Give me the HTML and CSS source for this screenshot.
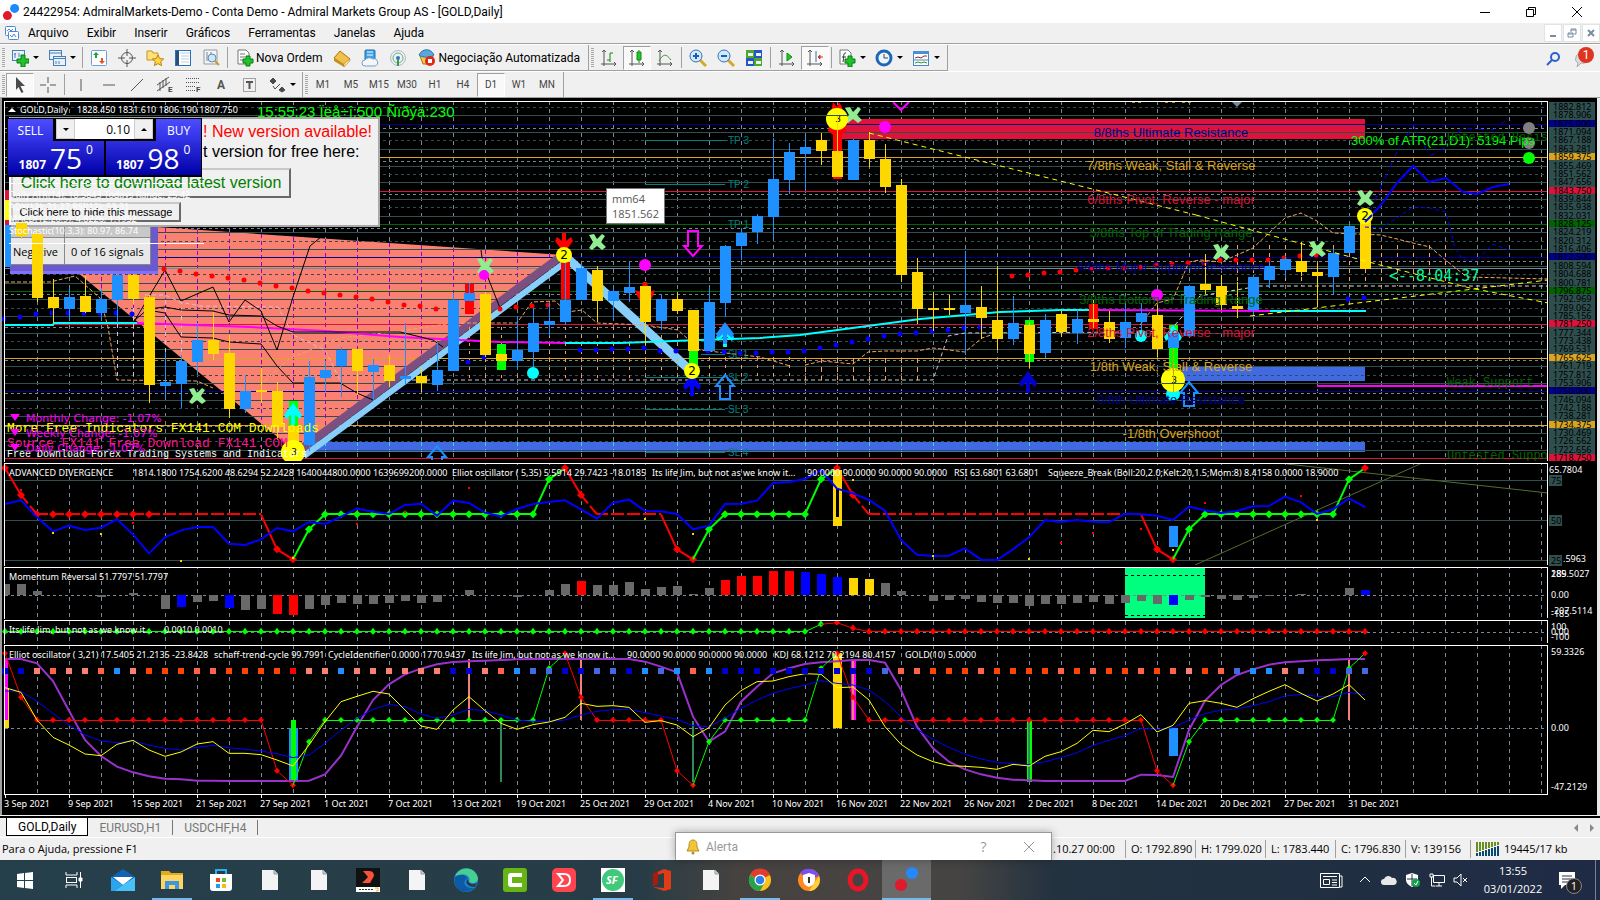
FILE: index.html
```html
<!DOCTYPE html>
<html lang="pt">
<head>
  <meta charset="UTF-8">
  <meta name="viewport" content="width=device-width, initial-scale=1.0">
  <title>24422954: AdmiralMarkets-Demo - [GOLD,Daily]</title>
  <link rel="stylesheet" href="styles.css">
</head>
<body>
  <header class="titlebar">
    <svg class="logo" viewBox="0 0 20 20"><circle cx="14" cy="6" r="5" fill="#1e88ff"/><circle cx="6" cy="14" r="5" fill="#e01a2b"/></svg>
    <span class="title">24422954: AdmiralMarkets-Demo - Conta Demo - Admiral Markets Group AS - [GOLD,Daily]</span>
    <div class="window-buttons">
      <button aria-label="Minimizar"><svg viewBox="0 0 12 12"><path d="M1 6.500h10"/></svg></button>
      <button aria-label="Restaurar"><svg viewBox="0 0 12 12"><path d="M1.500 3.500h7v7h-7zM3.500 3.500v-2h7v7h-2"/></svg></button>
      <button aria-label="Fechar"><svg viewBox="0 0 12 12"><path d="M1 1l10 10M11 1L1 11"/></svg></button>
    </div>
  </header>

  <nav class="menubar">
    <svg class="menu-icon" viewBox="0 0 16 16" fill="#fff" stroke="#4c86d8"><rect x="1.500" y="1.500" width="10" height="9" rx="1"/><path d="M3 6l2-2 2 2 2-2"/><rect x="4.500" y="6.500" width="10" height="8" rx="1"/><path d="M6 10l2 2 2-3 2 3"/></svg>
    <button>Arquivo</button>
    <button>Exibir</button>
    <button>Inserir</button>
    <button>Gráficos</button>
    <button>Ferramentas</button>
    <button>Janelas</button>
    <button>Ajuda</button>
    <div class="mdi-buttons">
      <button aria-label="Minimizar janela"><svg viewBox="0 0 12 12"><path d="M3 9h6" stroke-width="2"/></svg></button>
      <button aria-label="Restaurar janela"><svg viewBox="0 0 12 12"><path d="M2 6h5v4H2zM2 7h5M5 5V2h5v5H8M5 3h5"/></svg></button>
      <button aria-label="Fechar janela"><svg viewBox="0 0 12 12"><path d="M3 3l6 6M9 3L3 9" stroke-width="2"/></svg></button>
    </div>
  </nav>

  <div class="toolbar">
    <div class="group">
      <span class="grip"></span>
      <button class="tool drop" aria-label="Novo gráfico"><svg viewBox="0 0 18 18"><rect x="1.500" y="1.500" width="12" height="10" fill="#e8f2fb" stroke="#4a7fb5"/><path d="M4 4v5M3 5h2M8 4v4" stroke="#4a7fb5"/><path d="M10 6h4v4h4v4h-4v4h-4v-4H6v-4h4z" fill="#1fc32b" stroke="#0b7a12"/></svg></button>
      <button class="tool drop" aria-label="Perfis"><svg viewBox="0 0 18 18" fill="#e8f2fb" stroke="#4a7fb5"><rect x="1.500" y="1.500" width="12" height="9"/><path d="M1 4h12"/><rect x="5.500" y="7.500" width="12" height="9"/><path d="M5 9.500h12M8 12v3M11 12v3"/></svg></button>
      <span class="sep"></span>
      <button class="tool" aria-label="Observação do mercado"><svg viewBox="0 0 18 18"><rect x="1.500" y="1.500" width="15" height="15" rx="1" fill="#fff" stroke="#6aa0dc"/><path d="M6 3l3 3H7v3H5V6H3z" fill="#18a83a"/><path d="M12 15l-3-3h2V9h2v3h2z" fill="#e2552a"/></svg></button>
      <button class="tool" aria-label="Janela de dados"><svg viewBox="0 0 18 18" fill="none" stroke="#555"><circle cx="9" cy="9" r="5.500"/><path d="M9 0v7M9 11v7M0 9h7M11 9h7"/></svg></button>
      <button class="tool" aria-label="Navegador"><svg viewBox="0 0 18 18"><path d="M1 2h5l1 2h5v7H1z" fill="#ffe27a" stroke="#c29518"/><path d="M12 6l1.700 3.600 4 .4-3 2.600.9 4-3.600-2-3.600 2 .9-4-3-2.600 4-.4z" fill="#ffd63d" stroke="#c27e10"/></svg></button>
      <button class="tool" aria-label="Terminal"><svg viewBox="0 0 18 18"><rect x="1.500" y="1.500" width="15" height="15" fill="#fff" stroke="#2f6fb5"/><path d="M2 2h3v14H2z" fill="#2b4f7d"/><path d="M6 4h10M7 7h8M7 10h8M7 13h8" stroke="#b9cfe8"/></svg></button>
      <button class="tool" aria-label="Testador"><svg viewBox="0 0 18 18"><path d="M2 1h13v14H2z" fill="#f4f4f4" stroke="#999"/><path d="M5 3v9M9 3v6" stroke="#6c87a5"/><circle cx="10" cy="9" r="4" fill="#cfe6f8" stroke="#5b8cb9"/><path d="M13 12l4 4" stroke="#d09a2a" stroke-width="2"/></svg></button>
      <span class="sep"></span>
      <button class="tool wide"><svg viewBox="0 0 18 18"><path d="M2 1h8l3 3v11H2z" fill="#fff" stroke="#777"/><path d="M4 5h5M4 8h5M4 11h3" stroke="#777"/><path d="M10 7h4v3h3v4h-3v3h-4v-3H7v-4h3z" fill="#1fc32b" stroke="#0b7a12"/></svg>Nova Ordem</button>
      <button class="tool" aria-label="MetaEditor"><svg viewBox="0 0 18 18"><path d="M1 9l6-7 10 8-6 6z" fill="#f0c24a" stroke="#a87410"/><path d="M1 9v3l10 6v-3z" fill="#c98f1e"/><path d="M11 15l6-5v2l-6 6z" fill="#f7e6ae" stroke="#a87410" stroke-width=".5"/></svg></button>
      <button class="tool" aria-label="Mercado"><svg viewBox="0 0 18 18"><rect x="4" y="1" width="10" height="12" rx="1" fill="#39a3ea" stroke="#1f6fb0"/><path d="M6 3h6M6 6h6" stroke="#fff"/><path d="M4 17a3 3 0 010-6 5 4 0 018-1 3.500 3.500 0 012 7z" fill="#f3f7fb" stroke="#7f9cba"/></svg></button>
      <button class="tool" aria-label="Sinais"><svg viewBox="0 0 18 18" fill="none"><circle cx="9" cy="9" r="7.500" stroke="#9cc0cf"/><circle cx="9" cy="9" r="5" stroke="#6fae7b"/><circle cx="9" cy="9" r="2" fill="#2a7ad0"/><path d="M9 10v7" stroke="#3c9a46" stroke-width="2"/></svg></button>
      <button class="tool wide"><svg viewBox="0 0 18 18"><path d="M2 7h13l-2 8H5z" fill="#f3c84d" stroke="#a87410"/><path d="M1 6c3-7 12-7 15 0-4 3-11 3-15 0z" fill="#58a8de" stroke="#2c74a8"/><circle cx="12" cy="12" r="5" fill="#dd2a1b"/><path d="M10 10h4v4h-4z" fill="#fff"/></svg>Negociação Automatizada</button>
    </div>
    <div class="group">
      <span class="grip"></span>
      <button class="tool" aria-label="Barras"><svg class="line" viewBox="0 0 18 18"><path d="M4 1v16M2 3l2-2 2 2M1 15h15M14 13l2 2-2 2"/><path d="M10 4v9M10 4h3M7 11h3" stroke="#138a13"/></svg></button>
      <button class="tool pressed" aria-label="Velas"><svg class="line" viewBox="0 0 18 18"><path d="M4 1v16M2 3l2-2 2 2M1 15h15M14 13l2 2-2 2"/><path d="M11 1v13" stroke="#138a13"/><path d="M9 3h4v8H9z" fill="#20c828" stroke="#138a13"/></svg></button>
      <button class="tool" aria-label="Linhas"><svg class="line" viewBox="0 0 18 18"><path d="M4 1v16M2 3l2-2 2 2M1 15h15M14 13l2 2-2 2"/><path d="M3 12c4-7 7-8 12-1" stroke="#3e9d3e"/></svg></button>
      <span class="sep"></span>
      <button class="tool" aria-label="Mais zoom"><svg viewBox="0 0 18 18"><path d="M11 11l6 6" stroke="#d8a822" stroke-width="3"/><circle cx="7" cy="7" r="6" fill="#cfe8fb" stroke="#3273b5"/><path d="M4 7h6M7 4v6" stroke="#1d5fa8" stroke-width="2"/></svg></button>
      <button class="tool" aria-label="Menos zoom"><svg viewBox="0 0 18 18"><path d="M11 11l6 6" stroke="#d8a822" stroke-width="3"/><circle cx="7" cy="7" r="6" fill="#cfe8fb" stroke="#3273b5"/><path d="M4 7h6" stroke="#1d5fa8" stroke-width="2"/></svg></button>
      <button class="tool" aria-label="Organizar janelas"><svg viewBox="0 0 18 18"><path d="M1 1h8v8H1zM9 9h8v8H9z" fill="#4fa82a"/><path d="M9 1h8v8H9zM1 9h8v8H1z" fill="#2554c4"/><path d="M3 4h5v3H3zM11 4h5v3h-5zM3 12h5v3H3zM11 12h5v3h-5z" fill="#e9f2fb"/></svg></button>
      <span class="sep"></span>
      <button class="tool" aria-label="Rolagem automática"><svg class="line" viewBox="0 0 18 18"><path d="M4 1v16M2 3l2-2 2 2M1 15h15M14 13l2 2-2 2"/><path d="M9 4l5 4-5 4z" fill="#20c828" stroke="#138a13"/></svg></button>
      <button class="tool pressed" aria-label="Deslocar gráfico"><svg class="line" viewBox="0 0 18 18"><path d="M4 1v16M2 3l2-2 2 2M1 15h15M14 13l2 2-2 2"/><path d="M10 2v11" stroke="#2f6fb5"/><path d="M17 8h-4M14 6l-2 2 2 2z" fill="#d03a1a" stroke="#d03a1a"/></svg></button>
      <span class="sep"></span>
      <button class="tool drop" aria-label="Indicadores"><svg viewBox="0 0 18 18"><path d="M2 1h8l3 3v11H2z" fill="#fff" stroke="#777"/><path d="M8 4c-3-1-2 4-3 9M4 8h4" stroke="#333" fill="none"/><path d="M10 7h4v3h3v4h-3v4h-4v-4H7v-4h3z" fill="#1fc32b" stroke="#0b7a12"/></svg></button>
      <button class="tool drop" aria-label="Períodos"><svg viewBox="0 0 18 18"><circle cx="9" cy="9" r="7" fill="#eef5fc" stroke="#1d67b8" stroke-width="3"/><path d="M9 5v4h4" stroke="#444" fill="none"/></svg></button>
      <button class="tool drop" aria-label="Modelos"><svg viewBox="0 0 18 18"><rect x="1.500" y="2.500" width="15" height="14" fill="#fff" stroke="#4a86c6"/><path d="M1 2h16v3H1z" fill="#4a90d9"/><path d="M3 9l3-1 3 1 3-2 3 0" stroke="#9a2a1a" fill="none"/><path d="M2 11h14" stroke="#4a86c6"/><path d="M3 14l3-1 3 1 3-1 3 1" stroke="#2a9a2a" fill="none"/></svg></button>
    </div>
    <div class="toolbar-right">
      <button aria-label="Pesquisar"><svg viewBox="0 0 18 18" fill="none" stroke="#2a5fd0" stroke-width="2"><circle cx="11" cy="7" r="4"/><path d="M8 10l-5 5"/></svg></button>
      <button class="chat" aria-label="Mensagens"><svg viewBox="0 0 18 18"><path d="M2 7a7 5 0 0114 1 7 5 0 01-9 5l-4 4 1-4a6 5 0 01-2-6z" fill="#dcdce2" stroke="#aaa"/></svg><span class="badge">1</span></button>
    </div>
  </div>

  <div class="toolbar second">
    <div class="group">
      <span class="grip"></span>
      <button class="tool pressed" aria-label="Cursor"><svg viewBox="0 0 18 18"><path d="M5 1l9 9H9.500l3 6-2 1-3-6L5 14z" fill="#4a4a4a"/></svg></button>
      <button class="tool" aria-label="Mira"><svg class="line" viewBox="0 0 18 18"><path d="M9 1v6M9 11v6M1 9h6M11 9h6"/></svg></button>
      <span class="sep"></span>
      <button class="tool" aria-label="Linha vertical"><svg class="line" viewBox="0 0 18 18"><path d="M9 3v12"/></svg></button>
      <button class="tool" aria-label="Linha horizontal"><svg class="line" viewBox="0 0 18 18"><path d="M3 9h12"/></svg></button>
      <button class="tool" aria-label="Linha de tendência"><svg class="line" viewBox="0 0 18 18"><path d="M3 15L15 3"/></svg></button>
      <button class="tool" aria-label="Canal"><svg class="line" viewBox="0 0 18 18"><path d="M1 9L13 1M1 15L14 6M4 6v9M7 4v8M10 2v8"/><text x="12" y="16">E</text></svg></button>
      <button class="tool" aria-label="Fibonacci"><svg class="line" viewBox="0 0 18 18"><path d="M2 2.500h14M2 6.500h14M2 10.500h9M2 14.500h9" stroke-dasharray="1 1"/><text x="12" y="16">F</text></svg></button>
      <button class="tool letter" aria-label="Texto">A</button>
      <button class="tool" aria-label="Rótulo"><svg class="line" viewBox="0 0 18 18"><rect x="3.500" y="2.500" width="12" height="13" stroke-dasharray="1 1"/><path d="M6 6h7M9.500 6v7" stroke-width="2"/></svg></button>
      <button class="tool drop" aria-label="Setas"><svg viewBox="0 0 18 18" fill="#4a4a4a" stroke="#4a4a4a"><path d="M2 5l3-3 3 3-3 3zM11 14l3-3 3 3-3 2z"/><path d="M5 10l2 3 5-5" fill="none"/></svg></button>
    </div>
    <div class="group periods">
      <span class="grip"></span>
      <button>M1</button>
      <button>M5</button>
      <button>M15</button>
      <button>M30</button>
      <button>H1</button>
      <button>H4</button>
      <button class="pressed">D1</button>
      <button>W1</button>
      <button>MN</button>
    </div>
  </div>

  <main class="chart-window">
    <svg id="chart" class="chart" viewBox="0 98 1600 717"></svg>

    <div class="update-box">
      <p class="red">! New version available!</p>
      <p>t version for free here:</p>
      <button class="download">Click here to download latest version</button>
      <button class="hide">Click here to hide this message</button>
    </div>

    <div class="signals">
      <div class="row head"><span></span><span></span></div>
      <div class="row"><span>Negative</span><span>0 of 16 signals</span></div>
    </div>

    <div class="one-click">
      <div class="top">
        <button class="side">SELL</button>
        <div class="lots">
          <button aria-label="Diminuir"><i class="down"></i></button>
          <input type="text" aria-label="Volume" value="0.10">
          <button aria-label="Aumentar"><i class="up"></i></button>
        </div>
        <button class="side">BUY</button>
      </div>
      <div class="prices">
        <button><b>1807</b><span>75</span><sup>0</sup></button>
        <button><b>1807</b><span>98</span><sup>0</sup></button>
      </div>
    </div>

    <svg id="overlay" class="chart overlay" viewBox="0 98 1600 717"></svg>
    <div class="tooltip">mm64<br>1851.562</div>
  </main>

  <div class="tabs">
    <button class="active">GOLD,Daily</button>
    <button>EURUSD,H1</button>
    <button>USDCHF,H4</button>
    <span class="scroll"><i class="left"></i><i class="right"></i></span>
  </div>

  <footer class="statusbar">
    <span class="help">Para o Ajuda, pressione F1</span>
    <span class="date">.10.27 00:00</span>
    <span>O: 1792.890</span>
    <span>H: 1799.020</span>
    <span>L: 1783.440</span>
    <span>C: 1796.830</span>
    <span class="volume">V: 139156</span>
    <span class="traffic"><svg viewBox="0 0 24 14"><path d="M1 0v10M4 0v9M7 0v8M10 0v7M13 0v6M16 0v5M19 0v4M22 0v3" stroke="#6b8e23" stroke-width="2"/><path d="M1 11v3M4 10v4M7 9v5M10 8v6M13 7v7M16 6v8M19 5v9M22 4v10" stroke="#0b4a6f" stroke-width="2"/></svg>19445/17 kb</span>
    <div class="alert">
      <svg viewBox="0 0 14 16"><path d="M7 1c-4 0-4 4-4 7l-2 4h12l-2-4c0-3 0-7-4-7z" fill="#f0c53a" stroke="#b98d18"/><circle cx="7" cy="14" r="1.500" fill="#b98d18"/></svg>
      <span>Alerta</span>
      <button>?</button>
      <button aria-label="Fechar alerta"><svg viewBox="0 0 12 12"><path d="M1 1l10 10M11 1L1 11" stroke="#999"/></svg></button>
    </div>
  </footer>

  <div class="taskbar">
    <button aria-label="Iniciar"><svg viewBox="0 0 24 24" fill="#fff"><path d="M4 6l7-1v7H4zM12 5l8-1v8h-8zM4 13h7v7l-7-1zM12 13h8v8l-8-1z"/></svg></button>
    <button aria-label="Visão de tarefas"><svg viewBox="0 0 24 24" fill="none" stroke="#fff"><path d="M4 4v3h11V4M4 20v-3h11v3"/><rect x="4.500" y="9.500" width="10" height="5"/><path d="M18.500 4v16"/><path d="M17 10h3v3h-3z" fill="#fff"/></svg></button>
    <button aria-label="Email"><svg viewBox="0 0 24 24"><path d="M0 9l12-8 12 8v13H0z" fill="#0f62b4"/><path d="M2 9h20l-10 8z" fill="#fff"/><path d="M0 9l12 8-9 6H0z" fill="#2ba5ee"/><path d="M24 9L3 23h21z" fill="#47c1f7"/></svg></button>
    <button class="open" aria-label="Explorador"><svg viewBox="0 0 24 24"><path d="M1 3h8l2 2h12v16H1z" fill="#e5a91c"/><path d="M1 7h22v14H1z" fill="#ffd561"/><path d="M5 13h14v8h-4v-4H9v4H5z" fill="#3b97e0"/></svg></button>
    <button aria-label="Loja"><svg viewBox="0 0 24 24"><path d="M7 6V2h10v4" fill="none" stroke="#2bb0ee" stroke-width="2"/><path d="M1 6h22v14q0 3-3 3H4q-3 0-3-3z" fill="#fff"/><path d="M7 10h4v4H7z" fill="#e84a27"/><path d="M13 10h4v4h-4z" fill="#7fb928"/><path d="M7 16h4v4H7z" fill="#1d9ee6"/><path d="M13 16h4v4h-4z" fill="#fdb913"/></svg></button>
    <button aria-label="Documento"><svg viewBox="0 0 24 24"><path d="M4 2h12l4 4v16H4z" fill="#f4f4f4"/><path d="M16 2v4h4" fill="#ccc" stroke="#999"/></svg></button>
    <button aria-label="Documento"><svg viewBox="0 0 24 24"><path d="M4 2h12l4 4v16H4z" fill="#f4f4f4"/><path d="M16 2v4h4" fill="#ccc" stroke="#999"/></svg></button>
    <button aria-label="MetaTrader"><svg viewBox="0 0 24 24"><path d="M0 0h24v24H0z" fill="#111"/><path d="M0 19h24v5H0z" fill="#fff"/><path d="M7 3h6q5 0 5 5l-4 7H6l6-6z" fill="#f8513c"/><path d="M3 21.500h14" stroke="#333" stroke-dasharray="2 1"/><path d="M19 20h3v3h-2" stroke="#f2b21c" fill="none"/></svg></button>
    <button aria-label="Documento"><svg viewBox="0 0 24 24"><path d="M4 2h12l4 4v16H4z" fill="#f4f4f4"/><path d="M16 2v4h4" fill="#ccc" stroke="#999"/></svg></button>
    <button aria-label="Edge"><svg viewBox="0 0 24 24"><circle cx="12" cy="12" r="12" fill="#1b7fd1"/><path d="M1 9C4-2 21-3 24 10c0 5-5 6-9 4 3-7-7-10-14-5z" fill="#46cf8e"/><path d="M1 9c6-5 13-1 12 2-4 0-5 10 7 9C10 29-2 20 1 9z" fill="#0c59a4"/><path d="M14 11c-3 2-2 8 7 8l2-4c-4 2-9 1-9-4z" fill="#263c47"/></svg></button>
    <button aria-label="Camtasia"><svg viewBox="0 0 24 24"><rect width="24" height="24" rx="3" fill="#66b512"/><path d="M19 5H8q-3 0-3 3v8q0 3 3 3h11v-4H9V9h10z" fill="#fff"/></svg></button>
    <button aria-label="Deriv"><svg viewBox="0 0 24 24"><rect width="24" height="24" rx="5" fill="#ff444f"/><path d="M6 6h6q6 0 6 6t-6 6H6l5-6z" fill="none" stroke="#fff" stroke-width="2"/></svg></button>
    <button class="open" aria-label="SF"><svg viewBox="0 0 24 24"><path d="M0 0h24v24H0z" fill="#fff"/><circle cx="12" cy="12" r="11" fill="#41c97b"/><text x="5" y="16" class="sf">SF</text></svg></button>
    <button aria-label="Office"><svg viewBox="0 0 24 24"><path d="M3 6l11-5 7 2v18l-7 2-11-4 11 1V5L7 7v9l-4 2z" fill="#e03c16"/><path d="M3 6l5-3v13l-5 2z" fill="#a81b0e"/></svg></button>
    <button aria-label="Documento"><svg viewBox="0 0 24 24"><path d="M4 2h12l4 4v16H4z" fill="#f4f4f4"/><path d="M16 2v4h4" fill="#ccc" stroke="#999"/></svg></button>
    <button class="open" aria-label="Chrome"><svg viewBox="0 0 24 24"><circle cx="12" cy="12" r="11" fill="#fbc116"/><path d="M12 12L2 7a11 11 0 0120 0z" fill="#e33b2e"/><path d="M12 12L2 7a11 11 0 0010 16l5-9z" fill="#2aa14b"/><circle cx="12" cy="12" r="5.500" fill="#fff"/><circle cx="12" cy="12" r="4.300" fill="#2f7de9"/></svg></button>
    <button aria-label="Avast"><svg viewBox="0 0 24 24"><circle cx="12" cy="12" r="11" fill="#ff8a1c"/><path d="M12 12L3 5a11 11 0 0119 3z" fill="#7a4ff0"/><path d="M12 23a11 11 0 0010-15l-6 9z" fill="#ffd13b"/><path d="M12 5l6 2v5q0 5-6 7-6-2-6-7V7z" fill="#fff"/><path d="M12 9v6" stroke="#333" stroke-width="2"/></svg></button>
    <button aria-label="Opera"><svg viewBox="0 0 24 24"><ellipse cx="12" cy="12" rx="8" ry="9" fill="none" stroke="#e81626" stroke-width="5"/></svg></button>
    <button class="current" aria-label="MetaTrader 4"><svg viewBox="0 0 24 24"><circle cx="17" cy="6" r="6" fill="#2588ff"/><circle cx="6" cy="18" r="6" fill="#e01a2b"/></svg></button>
    <div class="tray">
      <svg class="news" viewBox="0 0 24 18"><path d="M1.500 2.500h19v14h-19zM21 5h2v11h-2M4 5.500h14M4.500 8.500h6v5h-6zM13 9h5M13 11.500h5M13 14h5"/></svg>
      <svg viewBox="0 0 16 16"><path d="M3 10l5-5 5 5"/></svg>
      <svg viewBox="0 0 16 16"><path d="M3 13a3 3 0 010-6 4.500 4.500 0 018-1 3.500 3.500 0 012 7z" fill="#e8e8e8" stroke="none"/></svg>
      <svg viewBox="0 0 16 16"><path d="M7 1l6 2v5q0 4-6 7-6-3-6-7V3z" fill="#fff" stroke="none"/><path d="M7 2v12M2 7h10" stroke="#263042"/><circle cx="11" cy="11" r="4" fill="#12a04a" stroke="none"/><path d="M9 11l2 2 2-4"/></svg>
      <svg viewBox="0 0 16 16"><path d="M4.500 3.500h11v7h-11zM10 11v3M7 14h6M1 2h3v3H1zM2.500 5v9h4"/></svg>
      <svg viewBox="0 0 16 16"><path d="M1 6h3l4-4v12l-4-4H1zM10 6l4 4M14 6l-4 4"/></svg>
      <div class="clock">13:55<br>03/01/2022</div>
      <div class="notes"><svg viewBox="0 0 20 20"><path d="M2 2h16v13H8l-4 4v-4H2z" fill="#fff" stroke="none"/><path d="M5 6h10M5 9h10M5 12h6" stroke="#263042"/></svg><span>1</span></div>
    </div>
  </div>
  <script src="script.js"></script>
</body>
</html>
```

FILE: styles.css
```css
* {
  box-sizing: border-box;
}
body {
  margin: 0;
  min-height: 100vh;
  display: flex;
  flex-direction: column;
  background: #f0f0f0;
  font-family: "Open Sans", "Noto Sans", sans-serif;
  font-size: 11px;
  color: #000;
  overflow: hidden;
}
button {
  font: inherit;
  color: inherit;
  background: none;
  border: 0;
  padding: 0;
  display: flex;
  align-items: center;
  justify-content: center;
}
svg {
  flex: none;
}

/* title and menu */
.titlebar, .menubar, .toolbar, .tabs {
  font-family: Roboto, "Open Sans", sans-serif;
  font-size: 12px;
}
.titlebar {
  display: flex;
  align-items: center;
  height: 23px;
  background: #fff;
}
.logo {
  width: 18px;
  height: 20px;
  margin: 0 3px 0 2px;
}
.title {
  flex: 1;
}
.window-buttons {
  display: flex;
}
.window-buttons button {
  width: 46px;
  height: 22px;
}
.window-buttons svg {
  width: 12px;
  height: 12px;
  fill: none;
  stroke: #000;
}
.menubar {
  display: flex;
  align-items: center;
  height: 21px;
  border-bottom: 1px solid #a0a0a0;
  gap: 18px;
}
.menu-icon {
  width: 16px;
  height: 16px;
  margin: 0 -10px 0 4px;
}
.mdi-buttons {
  display: flex;
  margin-left: auto;
  gap: 1px;
}
.mdi-buttons button {
  width: 18px;
  height: 18px;
  background: #fff;
  border: 1px solid #e3e3e3;
}
.mdi-buttons svg {
  width: 12px;
  height: 12px;
  fill: none;
  stroke: #778ca0;
}

/* toolbars */
.toolbar {
  display: flex;
  height: 27px;
  border-top: 1px solid #fff;
}
.toolbar.second {
  border-bottom: 1px solid #a0a0a0;
}
.group {
  display: flex;
  align-items: center;
  padding: 0 2px;
  border-right: 1px solid #a0a0a0;
  border-bottom: 1px solid #a0a0a0;
}
.second .group {
  border-bottom: 0;
}
.grip {
  width: 3px;
  height: 20px;
  margin-right: 1px;
  background: repeating-linear-gradient(#a8a8a8 0 1px, #f0f0f0 1px 2px);
}
.sep {
  width: 1px;
  height: 21px;
  margin: 0 2px;
  background: #a0a0a0;
}
.tool {
  width: 28px;
  height: 24px;
}
.tool svg {
  width: 18px;
  height: 18px;
}
.tool.drop {
  width: 37px;
  gap: 4px;
}
.tool.drop::after {
  content: "";
  border: 3px solid transparent;
  border-top-color: #000;
  border-bottom: 0;
}
.tool.wide {
  width: auto;
  padding: 0 6px;
  gap: 2px;
}
.pressed {
  background: #f9f9f9;
  border: 1px solid #a0a0a0;
  border-right-color: #fff;
  border-bottom-color: #fff;
}
.line {
  fill: none;
  stroke: #555;
}
.line text {
  font-size: 8px;
  font-weight: bold;
  fill: #444;
  stroke: none;
}
.letter {
  font-weight: bold;
  color: #555;
}
.periods button {
  width: 28px;
  height: 24px;
  color: #444;
  font-size: 10px;
}
.toolbar-right {
  display: flex;
  gap: 12px;
  margin: 1px 8px 0 auto;
}
.toolbar-right svg {
  width: 18px;
  height: 18px;
}
.chat {
  position: relative;
}
.badge {
  position: absolute;
  top: 1px;
  right: -2px;
  width: 16px;
  height: 16px;
  border-radius: 50%;
  background: #dd3520;
  color: #fff;
  line-height: 16px;
  text-align: center;
}

/* chart */
.chart-window {
  position: relative;
  background: #000;
}
.chart {
  display: block;
  width: 100%;
  height: auto;
}
.chart text {
  font-family: "Noto Sans", sans-serif;
  font-size: 9px;
  fill: #fff;
}
.chart .arial {
  font-family: "Liberation Sans", Arial, sans-serif;
}
.chart .courier {
  font-family: "Liberation Mono", monospace;
}
.chart .console {
  font-family: "DejaVu Sans Mono", monospace;
}
.chart .verdana {
  font-family: "DejaVu Sans", sans-serif;
}
.overlay {
  position: absolute;
  inset: 0;
  pointer-events: none;
}
.update-box {
  position: absolute;
  left: 9px;
  top: 19px;
  width: 371px;
  height: 110px;
  background: #f0f0f0;
  border: 2px solid #a9a9a9;
  border-left-color: #fff;
  font-family: "Liberation Sans", Arial, sans-serif;
  font-size: 16px;
  line-height: 20px;
}
.update-box p {
  margin: 0 0 0 192px;
}
.update-box .red {
  color: #f00;
  padding-top: 3px;
}
.update-box button {
  background: #f0f0f0;
  border: 2px solid #696969;
  border-top-color: #c8c8c8;
  border-left-color: #c8c8c8;
}
.update-box .download {
  width: 280px;
  height: 30px;
  margin-top: 6px;
  color: green;
}
.update-box .hide {
  width: 170px;
  height: 20px;
  margin-top: 4px;
  font-size: 11px;
}
.signals {
  position: absolute;
  left: 10px;
  top: 129px;
  width: 148px;
  height: 47px;
  padding-right: 7px;
  background: #6a5acd;
  border-bottom: 3px solid #8470ff;
}
.signals .row {
  display: flex;
  height: 27px;
  background: #e8e8e8;
  border-bottom: 1px solid #888;
  line-height: 27px;
}
.signals .head {
  height: 11px;
  background: #c8c8c8;
}
.signals span {
  width: 55px;
  padding-left: 3px;
  border-right: 1px solid #888;
}
.signals span + span {
  width: 86px;
  padding-left: 6px;
}
.one-click {
  position: absolute;
  left: 7px;
  top: 20px;
  width: 195px;
  padding: 1px 1px 2px;
  background: #000;
  color: #fff;
}
.one-click .top {
  display: flex;
  justify-content: space-between;
  height: 22px;
}
.side {
  width: 45px;
  background: linear-gradient(#4d4dff, #3030e4);
  font-size: 12px;
}
.lots {
  display: flex;
  width: 97px;
  height: 20px;
  background: #fff;
}
.lots button {
  width: 19px;
  background: #f0f0f0;
  border: 1px solid #ccc;
}
.lots input {
  width: 59px;
  border: 0;
  padding: 0 4px;
  font: inherit;
  font-size: 12px;
  text-align: right;
}
.down, .up {
  border: 3px solid transparent;
  border-top-color: #000;
  border-bottom: 0;
}
.up {
  border-top: 0;
  border-bottom: 3px solid #000;
}
.prices {
  display: flex;
  gap: 2px;
}
.prices button {
  flex: 1;
  height: 34px;
  background: linear-gradient(#2f2fe0, #0000a8);
  gap: 4px;
  align-items: flex-end;
  padding-bottom: 4px;
}
.prices b {
  font-size: 12px;
  line-height: 12px;
}
.prices span {
  font-size: 28px;
  line-height: 26px;
}
.prices sup {
  align-self: flex-start;
  font-size: 12px;
  line-height: 18px;
}
.tooltip {
  position: absolute;
  left: 606px;
  top: 90px;
  padding: 2px 5px;
  background: #fff;
  border: 1px solid #767676;
  color: #575757;
  line-height: 15px;
}

/* tabs and status */
.tabs {
  display: flex;
  height: 22px;
  margin-top: 1px;
  padding-left: 6px;
  border-top: 2px solid #000;
  border-bottom: 1px solid #fff;
  color: #777;
}
.tabs button {
  height: 15px;
  margin-top: 2px;
  padding: 0 11px;
  border-right: 1px solid #777;
}
.tabs .active {
  height: 18px;
  margin-top: 0;
  background: #fff;
  border: 1px solid #000;
  border-top: 0;
  color: #000;
}
.scroll {
  display: flex;
  gap: 12px;
  margin: 6px 6px 0 auto;
}
.left, .right {
  width: 0;
  height: 0;
  border: 4px solid transparent;
  border-right-color: #888;
  border-left: 0;
}
.right {
  border-left: 4px solid #888;
  border-right: 0;
}
.statusbar {
  position: relative;
  display: flex;
  align-items: center;
  height: 22px;
}
.statusbar > span {
  width: 70px;
  height: 18px;
  padding-left: 5px;
  border-right: 1px solid #a0a0a0;
  line-height: 18px;
  white-space: nowrap;
}
.statusbar .help {
  flex: 1;
  padding-left: 2px;
  border: 0;
}
.statusbar .date {
  width: 78px;
}
.statusbar .volume {
  width: 65px;
}
.statusbar .traffic {
  display: flex;
  align-items: center;
  width: 129px;
  gap: 4px;
  border: 0;
}
.traffic svg {
  width: 24px;
  height: 14px;
}
.alert {
  position: absolute;
  left: 675px;
  bottom: 0;
  display: flex;
  align-items: center;
  width: 377px;
  height: 28px;
  padding-left: 10px;
  background: #fff;
  border: 1px solid #999;
  border-bottom: 0;
  color: #999;
  box-shadow: 0 0 8px rgba(0, 0, 0, 0.3);
}
.alert svg {
  width: 14px;
  height: 16px;
}
.alert span {
  flex: 1;
  margin-left: 6px;
  font-family: Roboto, "Open Sans", sans-serif;
  font-size: 12px;
}
.alert button {
  width: 45px;
  font-size: 14px;
}
.alert button svg {
  width: 12px;
  height: 12px;
}

/* taskbar */
.taskbar {
  display: flex;
  height: 40px;
  background: linear-gradient(90deg, #26404b 0%, #273c46 40%, #464240 46%, #464443 60%, #22323f 66%, #1f2b45 100%);
}
.taskbar button {
  width: 49px;
}
.taskbar button svg {
  width: 24px;
  height: 24px;
}
.taskbar .open {
  background: linear-gradient(#76b9ed, #76b9ed) center bottom / 40px 2px no-repeat;
}
.taskbar .current {
  background: #6a6a6a;
  border-bottom: 2px solid #76b9ed;
}
.sf {
  fill: #fff;
  font-size: 11px;
  font-weight: bold;
  font-style: italic;
}
.tray {
  display: flex;
  align-items: center;
  gap: 8px;
  margin-left: auto;
  padding-right: 18px;
  border-right: 1px solid #7a8290;
  margin-right: 4px;
  color: #fff;
}
.tray svg {
  width: 16px;
  height: 16px;
  fill: none;
  stroke: #fff;
}
.tray .news {
  width: 24px;
  height: 18px;
  margin-right: 6px;
}
.clock {
  width: 72px;
  text-align: center;
  line-height: 18px;
}
.notes {
  position: relative;
}
.tray .notes svg {
  width: 20px;
  height: 20px;
  display: block;
}
.notes span {
  position: absolute;
  left: 9px;
  top: 8px;
  width: 16px;
  height: 16px;
  border: 1px solid #888;
  border-radius: 50%;
  background: #222;
  line-height: 14px;
  text-align: center;
}
```

FILE: script.js
```js
const chart = document.getElementById("chart");
const overlay = document.getElementById("overlay");
const NS = "http://www.w3.org/2000/svg";

const BLUE = "#1e90ff", GOLD = "#ffd700", SLATE = "#2f4f4f", GRID = "#778899";
let target = chart;

function add(tag, attrs, text) {
  const el = document.createElementNS(NS, tag);
  for (const key in attrs) el.setAttribute(key, attrs[key]);
  if (text) el.textContent = text;
  target.appendChild(el);
  return el;
}
// x of bar number i
function bx(i) {
  return 5 + 16 * i;
}
function rect(x, y, w, h, fill) {
  add("rect", { x, y, width: w, height: h, fill, "shape-rendering": "crispEdges" });
}
function line(x1, y1, x2, y2, stroke, dash, w) {
  add("path", { d: `M${x1} ${y1}L${x2} ${y2}`, stroke, "stroke-width": w || 1, "stroke-dasharray": dash || "none",
    "shape-rendering": x1 === x2 || y1 === y2 ? "crispEdges" : "auto" });
}
function poly(points, stroke, w, dash) {
  add("polyline", { points: points.join(" "), stroke, "stroke-width": w || 1, fill: "none", "stroke-dasharray": dash || "none" });
}
function label(x, y, text, fill, size, cls, anchor) {
  add("text", { x, y, class: cls || "", style: `fill:${fill || "#fff"};font-size:${size || 9}px`, "text-anchor": anchor || "start" }, text);
}
function dot(x, y, r, fill) {
  add("circle", { cx: x, cy: y, r, fill });
}
function shape(x, y, d, fill, stroke) {
  add("path", { d, fill, stroke: stroke || "none", "stroke-width": 2, transform: `translate(${x} ${y})` });
}

const TOP = 101, PANES = [[101, 461], [463, 565], [567, 618], [620, 643], [645, 794]];

// window frame
rect(0, 98, 1600, 717, "#000");
rect(0, 98, 2, 717, "#a0a0a0");
rect(1597, 98, 3, 717, "#e8e8e8");

// grid
for (let x = 37; x < 1548; x += 32) line(x, TOP, x, 794, GRID, "4 4");
for (let k = 0; k < 10; k++) line(5, 128 + 33 * k + (k > 2 ? 1 : 0), 1548, 128 + 33 * k + (k > 2 ? 1 : 0), GRID, "3 3");

// zones under the levels
rect(840, 119, 525, 20, "#dc143c");
rect(300, 442, 1065, 10, "#4169e1");
rect(1182, 367, 183, 14, "#4169e1");
for (let x = 325; x < 1365; x += 32) line(x, 442, x, 452, "#3fd8c0", "4 3");
add("path", { d: "M10 217L564 255L297 453Z", fill: "#fa8072" });
for (let x = 69; x < 560; x += 32) {
  const top = 217 + (x - 10) * 0.069;
  const bottom = x < 297 ? 217 + (x - 10) * 0.822 : 453 - (x - 297) * 0.742;
  line(x, Math.max(228, top), x, bottom, "#9400d3", "4 3");
}

// murrey levels
const levels = { 2: "#00008b", 6: "#daa520", 10: "#dc143c", 14: "#006400", 18: "#00008b", 22: "#006400", 26: "#dc143c", 30: "#daa520", 34: "#00008b", 38: "#daa520", 42: "#dc143c" };
for (let i = 0; i <= 42; i++) {
  const y = Math.round(107 + 8.36 * i);
  line(5, y, 1548, y, levels[i] || SLATE, i % 4 === 0 ? "3 3" : "");
}
line(5, 268, 1548, 268, GRID);

// zigzag bands
line(300, 450, 560, 257, "#7b4f80", "", 8);
line(304, 456, 567, 261, "#87cefa", "", 6);
line(567, 258, 692, 372, "#87cefa", "", 9);

// cloud
const CLOUD = "#f4a460";
poly([5, 282, 50, 282, 75, 276, 100, 298, 108, 327, 117, 380, 197, 381, 213, 388], CLOUD, 1, "4 2");
poly([260, 385, 290, 358, 340, 338, 400, 331, 453, 323, 517, 323, 532, 302, 555, 301, 567, 312, 582, 310, 597, 323, 645, 325, 678, 330, 700, 350, 760, 357, 790, 366], CLOUD, 1, "4 2");
poly([805, 365, 822, 361, 853, 364, 868, 352, 885, 351, 917, 351, 933, 348, 965, 352, 982, 338, 1000, 332], CLOUD, 1, "4 2");
poly([1140, 325, 1157, 303, 1173, 299, 1189, 262, 1200, 260, 1221, 262, 1253, 248, 1285, 218, 1301, 213, 1317, 221, 1333, 233, 1381, 235, 1413, 243, 1430, 247, 1448, 262, 1467, 277, 1548, 279], CLOUD, 1, "4 2");
for (let i = 29; i < 50; i++) line(bx(i), 327 + (i > 43 ? 30 : 0), bx(i), 380, CLOUD, "3 5");
for (let i = 50; i < 58; i++) line(bx(i), 358, bx(i), 380, CLOUD, "5 4");
for (let i = 77; i < 91; i++) line(bx(i), 245, bx(i), 286, CLOUD, "4 4");
const MIST = "#d8bfd8";
poly([145, 295, 165, 295, 180, 302, 200, 306, 278, 307, 293, 335, 325, 350, 340, 380], MIST, 1, "4 3");
poly([405, 380, 933, 380, 948, 336, 965, 333, 1150, 332, 1157, 330], MIST, 1, "4 3");
poly([1175, 325, 1200, 296, 1260, 286, 1548, 286], "#ddd", 1, "4 3");
for (let i = 7; i < 12; i++) line(bx(i), 300, bx(i), 380, MIST, "4 4");

// averages
const CYAN = "#00ffff", MAGENTA = "#ff00ff";
poly([5, 325, 53, 325, 54, 323, 137, 323], CYAN, 2);
poly([137, 323, 250, 327, 325, 331, 400, 337, 500, 342, 565, 343], MAGENTA, 2);
poly([565, 343, 620, 343, 700, 340, 760, 338, 800, 335, 860, 327, 920, 319, 1000, 312, 1060, 310, 1095, 310], CYAN, 2);
poly([1095, 310, 1270, 311], MAGENTA, 2);
poly([1270, 311, 1366, 311], CYAN, 2);
line(1317, 386, 1548, 386, MAGENTA, "", 2);

// black swings inside the pattern
poly([135, 320, 165, 270, 181, 301, 213, 287, 229, 322, 245, 300, 261, 311, 277, 350, 293, 297, 302, 270, 310, 246, 321, 237], "#000");
poly([135, 320, 148, 309, 165, 307, 181, 310, 213, 311, 229, 315, 261, 316, 277, 326, 293, 332, 400, 332, 433, 340, 443, 347], "#000");
poly([147, 310, 165, 313, 181, 337, 213, 338, 229, 342, 261, 344, 277, 366, 293, 383, 340, 383, 357, 393, 373, 400], "#000");
poly([481, 250, 483, 265, 500, 308], "#000");

// dotted stops
const redDots = { 10: 269, 11: 271, 12: 274, 13: 276, 14: 278, 15: 280, 16: 283, 17: 286, 18: 288, 19: 291, 20: 293, 21: 295, 22: 297, 23: 299, 24: 302, 25: 305, 26: 306, 27: 309, 31: 309, 32: 307, 33: 306, 34: 305,
  63: 276, 64: 275, 65: 273, 66: 272, 67: 270, 68: 269, 69: 268, 70: 268, 71: 267, 72: 265, 73: 264, 74: 263, 75: 263, 76: 260, 77: 260, 78: 260, 79: 260, 80: 258, 81: 256, 82: 255 };
for (const i in redDots) dot(bx(i) - 1, redDots[i], 2.5, "#f00");
const blueDots = { 0: 319, 1: 317, 2: 314, 3: 313, 4: 313, 5: 313, 6: 313, 7: 313, 8: 314, 29: 362, 30: 357, 36: 350, 37: 350, 38: 349, 39: 349, 40: 348, 41: 351, 42: 351, 43: 351, 44: 351, 45: 352, 46: 353, 47: 353, 48: 352, 49: 352,
  50: 351, 51: 348, 52: 345, 53: 342, 54: 339, 55: 336, 56: 334, 57: 333, 58: 331, 59: 330, 60: 328, 61: 327, 84: 299, 85: 298 };
for (const i in blueDots) dot(bx(i) - 1, blueDots[i], 2.5, "#0000ff");

// strength bars behind candles: [bar, top, bottom, color]
[[18, 401, 426, "#0f0"], [29, 284, 314, "#f00"], [31, 344, 370, "#0f0"], [35, 262, 299, "#f00"], [43, 351, 365, "#0f0"], [52, 128, 179, "#f00"], [64, 320, 362, "#0f0"], [68, 304, 329, "#f00"], [73, 325, 372, "#0f0"]]
  .forEach(b => rect(bx(b[0]) - 4, b[1], 9, b[2] - b[1], b[3]));

// candles: [high, open/close top, open/close bottom, low, up?]
const candles = [
  [225, 225, 267, 267, 1], [223, 223, 236, 239, 0], [230, 234, 298, 302, 0], [279, 297, 308, 323, 0], [288, 297, 309, 320, 1],
  [276, 296, 312, 313, 0], [288, 299, 313, 320, 1], [266, 275, 300, 323, 1], [270, 275, 299, 304, 0], [295, 297, 385, 403, 0],
  [352, 382, 386, 398, 1], [355, 361, 384, 408, 1], [323, 340, 362, 373, 1], [312, 340, 354, 360, 0], [335, 353, 409, 418, 0],
  [375, 391, 409, 413, 1], [368, 390, 392, 403, 0], [382, 391, 427, 440, 0], [426, 426, 448, 448, 0], [361, 377, 445, 451, 1],
  [361, 370, 378, 392, 1], [347, 350, 366, 397, 1], [349, 349, 371, 395, 0], [359, 365, 372, 401, 1], [355, 365, 381, 387, 0],
  [323, 376, 379, 385, 1], [367, 376, 383, 392, 0], [342, 370, 385, 391, 1], [293, 300, 371, 371, 1], [283, 293, 301, 301, 1],
  [292, 294, 355, 357, 0], [354, 354, 361, 361, 0], [316, 350, 361, 370, 1], [308, 323, 352, 372, 1], [303, 321, 325, 336, 1],
  [262, 300, 322, 325, 1], [264, 268, 300, 300, 1], [266, 270, 301, 322, 0], [286, 291, 301, 321, 1], [262, 287, 293, 302, 1],
  [286, 286, 322, 345, 0], [294, 299, 321, 330, 1], [292, 299, 311, 314, 0], [310, 310, 351, 351, 0], [287, 302, 351, 351, 1],
  [245, 246, 303, 317, 1], [228, 233, 246, 260, 1], [214, 216, 232, 244, 1], [138, 179, 217, 237, 1], [143, 152, 180, 194, 1],
  [137, 147, 154, 189, 1], [133, 140, 151, 165, 0], [120, 151, 177, 177, 0], [139, 140, 180, 180, 1], [132, 140, 159, 167, 0],
  [144, 159, 187, 193, 0], [179, 185, 275, 282, 0], [258, 272, 309, 324, 0], [292, 308, 310, 331, 0], [295, 308, 310, 315, 0],
  [251, 305, 313, 355, 1], [286, 307, 318, 339, 0], [266, 320, 339, 350, 0], [296, 323, 339, 345, 1], [322, 325, 354, 368, 0],
  [314, 320, 353, 358, 1], [311, 314, 332, 337, 0], [310, 319, 333, 344, 1], [299, 319, 322, 328, 0], [311, 322, 339, 343, 0],
  [305, 322, 338, 348, 1], [303, 313, 322, 332, 1], [305, 315, 349, 357, 0], [325, 333, 348, 380, 1], [285, 286, 336, 338, 1],
  [254, 284, 290, 294, 0], [275, 286, 305, 310, 0], [282, 306, 309, 318, 0], [275, 277, 310, 315, 1], [261, 266, 280, 288, 1],
  [257, 259, 270, 278, 1], [242, 261, 272, 276, 0], [263, 272, 276, 307, 0], [249, 253, 277, 294, 1], [222, 226, 253, 253, 1],
  [222, 222, 269, 269, 0]
];
function drawCandle(i) {
  const [high, top, bottom, low, up] = candles[i];
  const color = up ? BLUE : GOLD;
  rect(bx(i), high, 1, low - high, color);
  rect(Math.max(5, bx(i) - 5), top, i ? 11 : 6, bottom - top, color);
}
candles.forEach((c, i) => drawCandle(i));

// trend lines and forecast
line(869, 133, 1196, 215, "#ff0", "5 4");
poly([1196, 215, 1380, 265, 1470, 288, 1548, 303], "#ff0", 1, "5 4");
line(1250, 316, 1548, 280, "#ff0", "5 4");
poly([1365, 222, 1381, 205, 1397, 183, 1413, 166, 1429, 182, 1446, 178, 1463, 192, 1477, 194, 1493, 187, 1509, 184], "#0000ff", 2);
poly([1365, 222, 1381, 187, 1397, 152, 1413, 125, 1430, 156, 1446, 147, 1462, 128, 1493, 130, 1509, 118], "#0000ff", 1, "5 3 1 3");
poly([1365, 227, 1381, 228, 1397, 218, 1413, 207, 1430, 208, 1446, 212, 1455, 248, 1463, 260, 1477, 260, 1493, 244, 1509, 250], "#0000ff", 1, "4 3");

// targets
[["TP 3", 140, 645], ["TP 2", 184, 645], ["TP 1", 224, 0], ["SL 1", 354, 701], ["SL 2", 377, 645], ["SL 3", 409, 645], ["SL 4", 452, 645]].forEach(t => {
  if (t[2]) line(t[2], t[1], 725, t[1], "#008080");
  label(728, t[1] + 4, t[0], "#008080", 10, "arial");
});

// markers
const CROSS = "M-8 -7L-3 -8L0 -3L5 -8L8 -6L4 0L9 5L5 8L0 4L-5 8L-8 6L-4 0Z";
[[485, 266], [597, 242], [853, 115], [197, 396], [1221, 252], [1317, 249], [1365, 198]].forEach(p => shape(p[0], p[1], CROSS, "#90ee90"));
const ARROW = "M0 -10L9 2L7 6L2 2V12H-2V2L-7 6L-9 2Z";
shape(725, 335, ARROW, CYAN);
shape(725, 332, ARROW, BLUE);
shape(293, 413, ARROW, CYAN);
shape(1173, 335, ARROW, CYAN);
rect(1168, 333, 11, 15, BLUE);
shape(692, 384, ARROW, "#0000ff");
shape(1028, 381, ARROW, "#0000cd");
const DOWN = "M0 10L9 -2L7 -6L2 -2V-10H-2V-2L-7 -6L-9 -2Z";
shape(564, 243, DOWN, "#f00");
shape(837, 122, "M-9 9L0 16L9 9L5 -15L2 -20L0 -15L-4 -20L-5 -15Z", "#f00");
shape(645, 293, "M-10 -3L-4 -1L-2 -11H2L4 -1L10 -3L7 5L0 10L-7 5Z", "#f00");
drawCandle(40);
const HOLLOW = "M0 0L9 11H5V24H-5V11H-9Z";
shape(725, 375, HOLLOW, "none", BLUE);
shape(1189, 382, HOLLOW, "none", BLUE);
shape(437, 446, "M-5 14V11H-9L0 0L9 11H5V14", "none", BLUE);
shape(693, 256, "M0 0L9 -10H5V-25H-5V-10H-9Z", "none", MAGENTA);
shape(901, 102, "M-8 0L0 8L8 0", "none", MAGENTA);
shape(1237, 102, "M-5 0H5L0 5Z", GRID);
[[484, 275, 5], [645, 265, 6], [885, 127, 6], [1157, 295, 6]].forEach(p => dot(p[0], p[1], p[2], MAGENTA));
[[533, 373, 6], [1141, 336, 6], [1173, 394, 7]].forEach(p => dot(p[0], p[1], p[2], CYAN));
[[837, 119, 11], [1173, 380, 12], [293, 452, 12], [564, 255, 8], [692, 371, 8], [1365, 216, 8]].forEach(p => dot(p[0], p[1], p[2], "#ff0"));
[[564, 255], [692, 371], [1365, 216]].forEach(p => label(p[0], p[1] + 4, "2", "#000", 12, "verdana", "middle"));
[[837, 119], [1173, 380], [293, 452]].forEach(p => label(p[0] + 1, p[1] + 3, "3", "#000", 9, "verdana", "middle"));
line(837, 116, 837, 151, GOLD);
line(1173, 348, 1173, 392, "#b8b000");
line(826, 115, 848, 115, SLATE);
line(1162, 383, 1185, 383, SLATE);
line(1365, 222, 1372, 215, "#0000ff", "", 2);
dot(1529, 128, 6, "#808080");
dot(1529, 143, 6, "#808080");
dot(1529, 158, 6, "#0f0");

// texts on the chart
const murrey = [
  ["8/8ths Ultimate Resistance", 137, "#00008b"], ["7/8ths Weak, Stall & Reverse", 170, "#daa520"], ["6/8ths Pivot, Reverse - major", 204, "#dc143c"],
  ["5/8ths Top of Trading Range", 237, "#006400"], ["4/8ths Major Support/Resistance", 271, "#00008b"], ["3/8ths Bottom of Trading Range", 304, "#006400"],
  ["2/8ths Pivot, Reverse - major", 337, "#dc143c"], ["1/8th Weak, Stall & Reverse", 371, "#daa520"], ["0/8th Ultimate Resistance", 404, "#00008b"],
  ["-1/8th Overshoot", 438, "#daa520"]
];
murrey.forEach(m => label(1171, m[1], m[0], m[2], 13, "arial", "middle"));
[1132, 1138, 1165, 1172, 1182, 1188].forEach(x => rect(x, 101, 3, 2, "#b8860b"));
label(257, 117, "15:55:23 Ïëå÷î:500 Ñïðýä:230", "#00ff00", 15, "arial");
label(1351, 145, "300% of ATR(21,D1): 5194  Pips", "#00ff00", 13, "arial");
label(1447, 141, "Untested Resist", "#006400", 12, "courier");
label(1447, 386, "Weak Support", "#006400", 12, "courier");
label(1447, 459, "Untested Suppo", "#006400", 12, "courier");
label(1389, 281, "<--8:04:37", "#00fa9a", 15, "console");
label(7, 432, "More Free Indicators FX141.COM Downloads", "#ff0", 13, "courier");
label(7, 447, "Source FX141 Free Download FX141.COM", "#ff1493", 13, "courier");
label(7, 457, "Free Download Forex Trading Systems and Indicators", "#fff", 10, "courier");
[["Monthly Change: -1.07%", 422], ["Weekly Change: -1.07%", 437], ["Daily Change: -1.07%", 452]].forEach(t => {
  label(26, t[1], t[0], MAGENTA, 11, "verdana");
  shape(15, t[1] - 8, "M-5 0H5L0 7Z", MAGENTA);
});
label(20, 113, "GOLD,Daily");
label(77, 113, "1828.450 1831.610 1806.190 1807.750");
shape(12, 112, "M-4 0H4L0 -4Z", "#fff");

// price axis, halves rounded to even
function price(i) {
  const mils = (1882.8125 - 3.90625 * i) * 1000;
  let r = Math.round(mils);
  if (r - mils === 0.5 && r % 2) r--;
  return (r / 1000).toFixed(3);
}
rect(1548, 101, 49, 360, "#000");
for (let i = 0; i <= 42; i++) {
  const y = 107 + 8.36 * i;
  rect(1549, y - 5, 46, 10, SLATE);
  if (!levels[i]) label(1553, y + 3, price(i), "#000");
}
for (const i in levels) {
  const y = 107 + 8.36 * i - 1;
  rect(1549, y - 3, 46, 7, levels[i]);
  label(1553, y + 4, price(i), "#000");
}

// sub windows; values are thirds of a pixel below y = 460
function sy(v) {
  return 460 + v / 3;
}
function series(values, stroke, w) {
  const points = [];
  values.forEach((v, i) => points.push(bx(i), sy(v)));
  poly(points, stroke, w);
}
function flat(n, v) {
  return Array(n).fill(v);
}

// oscillator stepping through fixed states, shared by two windows
const states = "pd" + "f".repeat(15) + "lbu" + "f".repeat(14) + "hpd" + "f".repeat(5) + "lbu" + "f".repeat(6) + "hpd" + "f".repeat(18) + "lbu" + "f".repeat(9) + "hp";
function oscillator(scale, w, size) {
  let up = false;
  for (let i = 0; i < 86; i++) {
    const s = states[i];
    if (i && states[i - 1] === "b") up = true;
    if (i && states[i - 1] === "p") up = false;
    const color = up ? "#0f0" : "#f00";
    if (i) line(bx(i - 1), sy(scale[states[i - 1]]), bx(i), sy(scale[s]), color, size > 3 && !up && s === "f" ? "11 3" : "", w);
    if (size < 4 || up || s !== "f" || i < 10) shape(bx(i), sy(scale[s]), `M0 ${-size}L${size} 0L0 ${size}L${-size} 0Z`, s === "p" || s === "b" ? "#f00" : color);
  }
}

// window 1
[61, 181, 301].forEach(v => line(5, Math.round(sy(v)), 1548, Math.round(sy(v)), SLATE));
line(1287, 464, 1548, 493, "#556b2f");
line(1195, 565, 1420, 464, "#556b2f");
oscillator({ p: 24, h: 58, d: 105, f: 163, u: 208, l: 268, b: 298 }, 2, 4);
rect(833, 470, 9, 56, GOLD);
rect(836, 489, 3, 28, "#000");
rect(1169, 526, 9, 21, BLUE);
series([132, 121, 172, 214, 197, 210, 203, 178, 223, 280, 232, 211, 201, 201, 251, 255, 238, 204, 214, 186, 192, 170, 146, 155, 162, 135, 131, 167, 122, 129, 158, 169, 147, 132, 126, 121, 148, 176, 128, 119, 153, 154, 162, 208, 197, 132, 131, 122, 69, 66,
  57, 30, 86, 100, 120, 152, 240, 284, 288, 287, 265, 299, 300, 268, 232, 181, 186, 180, 185, 187, 161, 163, 167, 180, 140, 151, 159, 153, 139, 138, 110, 127, 162, 148, 115, 141], "#0000ff", 2);
[[1, 88], [8, 186], [22, 188], [25, 153], [29, 82], [36, 92], [66, 247], [68, 217], [71, 203], [75, 125], [81, 106]].forEach(p => rect(bx(p[0]) - 1, sy(p[1]), 2, 2, "#f00"));
[[3, 217], [6, 220], [11, 301], [18, 292], [40, 175], [43, 220], [53, 58], [58, 285], [64, 293], [73, 268], [82, 177]].forEach(p => rect(bx(p[0]) - 1, sy(p[1]), 2, 2, GOLD));
[[9, "ADVANCED DIVERGENCE"], [133, "1814.1800 1754.6200 48.6294 52.2428 1640044800.0000 1639699200.0000"], [452, "Elliot oscillator ( 5,35) 5.5914 29.7423 -18.0185"],
  [652, "Its life Jim, but not as we know it..."], [807, "90.0000 90.0000 90.0000 90.0000"], [954, "RSI 63.6801 63.6801"],
  [1048, "Squeeze_Break (Boll:20,2.0;Kelt:20,1.5;Mom:8) 8.4158 0.0000 18.9000"]].forEach(t => label(t[0], 476, t[1]));

// window 2, histogram
const BASE = 405;
rect(1125, 568, 80, 50, "#00ff7f");
line(1125, 575, 1205, 575, "#000", "3 3");
line(1125, 615, 1205, 615, "#000", "3 3");
line(5, 595, 1548, 595, GRID, "3 3");
const bars = { 0: 372, 1: 372, 2: 393, 6: 410, 8: 399, 10: 446, 11: 441, 12: 426, 13: 422, 14: 443, 15: 449, 16: 446, 17: 461, 18: 465, 19: 446, 20: 434, 21: 428, 22: 431, 23: 431, 24: 428, 25: 422, 26: 428, 27: 426, 29: 390, 32: 410, 34: 390,
  35: 372, 36: 363, 37: 375, 38: 375, 39: 366, 40: 387, 41: 381, 42: 378, 43: 402, 44: 384, 45: 360, 46: 348, 47: 348, 48: 333, 49: 333, 50: 336, 51: 342, 52: 351, 53: 354, 54: 357, 55: 369, 56: 393, 58: 423, 59: 419, 60: 416,
  61: 426, 62: 428, 63: 428, 64: 437, 65: 431, 66: 431, 67: 428, 68: 425, 69: 431, 70: 428, 71: 422, 72: 431, 73: 434, 74: 419, 75: 410, 76: 416, 77: 419, 78: 413, 79: 408, 81: 402, 84: 384, 85: 390 };
const barColors = { 11: "#00f", 14: "#00f", 17: "#f00", 18: "#f00", 36: "#f00", 45: "#f00", 46: "#f00", 47: "#f00", 48: "#f00", 49: "#f00", 50: "#00f", 51: "#00f", 52: "#00f", 53: GOLD, 54: GOLD, 73: "#00f", 85: "#00f" };
for (const i in bars) {
  const x = Math.max(5, bx(i) - 4);
  rect(x, sy(Math.min(BASE, bars[i])), i === "0" ? 5 : 9, Math.abs(bars[i] - BASE) / 3, barColors[i] || "#696969");
}
label(9, 580, "Momentum Reversal 51.7797 51.7797");

// window 3
line(5, 632, 1548, 632, GRID, "3 3");
const life = flat(51, 515).concat([493, 488, 505], flat(32, 515));
life.forEach((v, i) => {
  const color = i > 51 ? "#f00" : "#0f0";
  if (i) line(bx(i - 1), sy(life[i - 1]), bx(i), sy(v), color);
  shape(bx(i), sy(v), "M0 -4L3 0L0 3L-3 0Z", color);
});
label(9, 633, "Its life Jim, but not as we know it...");
label(164, 633, "0.0010 0.0010");

// window 4
line(5, 728, 1548, 728, GRID, "3 3");
rect(5, 688, 4, 40, GOLD);
rect(5, 659, 3, 61, MAGENTA);
rect(289, 728, 9, 54, BLUE);
rect(291, 720, 5, 62, "#0f0");
rect(833, 653, 9, 75, GOLD);
rect(851, 659, 5, 61, MAGENTA);
rect(1169, 728, 9, 28, BLUE);
rect(1027, 721, 5, 61, "#0f0");
[29, 36, 53, 84].forEach(i => rect(bx(i) - 1, 659, 2, 61, "#f08080"));
[31, 43, 64].forEach(i => rect(bx(i) - 1, 721, 2, 61, "#2e8b57"));
series([597, 597, 610, 663, 752, 840, 888, 920, 937, 949, 956, 958, 962, 962, 963, 963, 963, 963, 963, 962, 943, 887, 800, 720, 673, 643, 626, 613, 606, 604, 602, 600, 598, 597, 597, 597, 597, 597, 597, 597, 605, 620, 637, 770, 845, 815, 725, 680, 640, 625,
  612, 607, 604, 600, 600, 608, 690, 800, 865, 905, 928, 943, 953, 959, 961, 963, 963, 963, 963, 963, 963, 944, 945, 951, 810, 722, 675, 645, 628, 614, 607, 604, 601, 599, 597, 597], "#9932cc", 2);
oscillator({ p: 580, h: 625, d: 712, f: 780, u: 845, l: 932, b: 976 }, 1, 3);
series([693, 695, 724, 760, 795, 825, 843, 848, 843, 855, 865, 870, 862, 856, 863, 868, 873, 881, 893, 885, 850, 810, 775, 748, 733, 740, 762, 775, 765, 748, 752, 765, 780, 784, 785, 780, 765, 754, 749, 748, 758, 768, 778, 797, 800, 775, 745, 720, 700, 686,
  675, 662, 670, 675, 690, 725, 770, 808, 838, 862, 883, 897, 907, 911, 914, 905, 893, 878, 856, 841, 827, 805, 808, 803, 780, 761, 750, 747, 737, 725, 708, 703, 709, 710, 697, 704], "#0000ff", 1);
series([683, 697, 780, 832, 855, 882, 887, 853, 841, 870, 889, 876, 852, 845, 880, 880, 884, 900, 918, 855, 785, 725, 709, 694, 702, 750, 798, 808, 750, 710, 752, 790, 808, 794, 786, 772, 730, 739, 737, 742, 787, 782, 795, 830, 803, 735, 692, 665, 663, 650,
  641, 643, 683, 681, 720, 800, 853, 885, 905, 917, 919, 922, 928, 913, 918, 889, 875, 850, 811, 815, 792, 764, 816, 796, 730, 722, 730, 742, 716, 694, 674, 700, 723, 702, 674, 720], "#ff0", 1);
const squareColors = { m: "#0000cd", s: "#fa8072", t: "#ff6347", d: "#1e90ff", o: "#ff4500", r: "#f00", y: "#4169e1" };
"mmstsstdsooottoooorssdssssssmmstdyymmyymdydtdmmmmmmmmmmyttoootoooototoototsotyddsymmyymmd".split("").slice(0, 86).forEach((c, i) => rect(bx(i) - 3, 668, 6, 6, squareColors[c]));
[[9, "Elliot oscillator ( 3,21) 17.5405 21.2135 -23.8428"], [214, "schaff-trend-cycle 99.7991"], [328, "CycleIdentifier 0.0000 1770.9437"], [472, "Its life Jim, but not as we know it..."],
  [627, "90.0000 90.0000 90.0000 90.0000"], [774, "KDJ 68.1212 70.2194 80.4157"], [905, "GOLD(10) 5.0000"]].forEach(t => label(t[0], 658, t[1]));

// borders and gaps between windows
PANES.forEach(([top, bottom], n) => {
  if (n) rect(5, top - 2, 1592, 2, "#000");
  rect(4, top, 1544, 1, "#fff");
  rect(4, bottom, 1544, 1, "#fff");
  rect(4, top, 1, bottom - top, "#fff");
  rect(1547, top, 1, bottom - top, "#fff");
});
rect(0, 795, 1597, 20, "#000");
rect(0, 98, 2, 717, "#a0a0a0");

// axis labels
[[1549, 473, "65.7804"], [1563, 562, ".5963"], [1551, 577, "289.5027"], [1551, 577, "185"], [1551, 598, "0.00"], [1551, 614, "-207.5114"], [1551, 617, "-185"],
  [1551, 630, "100"], [1551, 635, "0.00"], [1551, 640, "-100"], [1551, 655, "59.3326"], [1551, 731, "0.00"], [1551, 790, "-47.2129"]].forEach(t => label(t[0], t[1], t[2]));
[[480, "75"], [520, "50"], [560, "25"]].forEach(t => {
  rect(1549, t[0] - 5, 13, 11, SLATE);
  label(1551, t[0] + 4, t[1], "#000");
});

// dates
"3 Sep,9 Sep,15 Sep,21 Sep,27 Sep,1 Oct,7 Oct,13 Oct,19 Oct,25 Oct,29 Oct,4 Nov,10 Nov,16 Nov,22 Nov,26 Nov,2 Dec,8 Dec,14 Dec,20 Dec,27 Dec,31 Dec".split(",").forEach((d, i) => {
  line(5 + 64 * i, 794, 5 + 64 * i, 798, "#fff");
  label(4 + 64 * i, 807, d + " 2021");
});

// things that lie over the panels
target = overlay;
drawCandle(0);
drawCandle(1);
drawCandle(2);
line(9, 183, 204, 183, "#fff", "6 3");
label(9, 198, "Daily ATR(14): 18.5843 Todays Range: 25.42");
label(9, 210, "ADX(12): 21.27 RSI(12): 53.31");
label(9, 222, "MACD(12,26,9): 4.8226, 1.1952");
label(9, 234, "Stochastic(10,3,3): 80.97, 86.74");
line(9, 243, 204, 243, "#fff");
rect(5, 190, 4, 35, "#dc143c");
rect(5, 200, 4, 20, "#ff0");
```
